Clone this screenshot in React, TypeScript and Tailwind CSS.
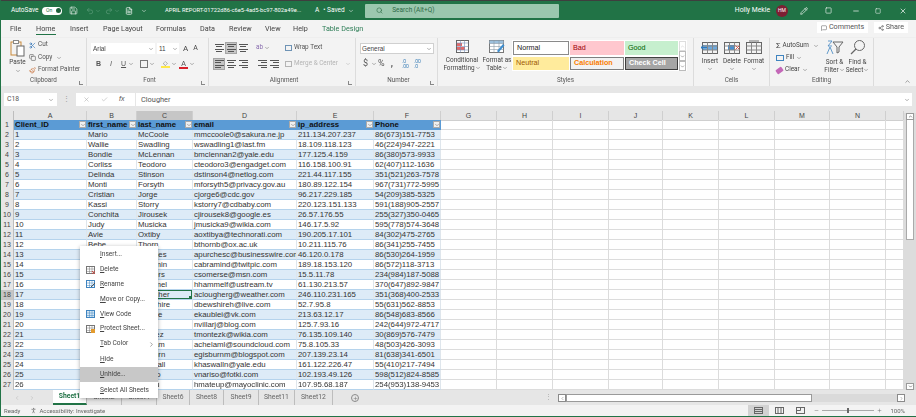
import { ChevronDown, ChevronUp, ChevronRight, ChevronLeft, Plus, Search, Undo2, Redo2, Save, FileText, Pencil, X, Minus, Square, MessageSquare, Share2, Check, Scissors, Copy, Paintbrush, PersonStanding } from "lucide-react";

const font = "font-['Liberation_Sans',Arial,sans-serif]";
const ui = "font-['Roboto','Noto_Sans',sans-serif]";

const rows = [
  ["1", "Mario", "McCoole", "mmccoole0@sakura.ne.jp", "211.134.207.237", "86(673)151-7753"],
  ["2", "Wallie", "Swadling", "wswadling1@last.fm", "18.109.118.123", "46(224)947-2221"],
  ["3", "Bondie", "McLennan", "bmclennan2@yale.edu", "177.125.4.159", "86(380)573-9933"],
  ["4", "Corliss", "Teodoro", "cteodoro3@engadget.com", "116.158.100.91", "62(407)112-1636"],
  ["5", "Delinda", "Stinson", "dstinson4@netlog.com", "221.44.117.155", "351(521)263-7578"],
  ["6", "Monti", "Forsyth", "mforsyth5@privacy.gov.au", "180.89.122.154", "967(731)772-5995"],
  ["7", "Cristian", "Jorge", "cjorge6@cdc.gov", "96.217.229.185", "54(209)385-5325"],
  ["8", "Kassi", "Storry", "kstorry7@cdbaby.com", "220.123.151.133", "591(188)905-2557"],
  ["9", "Conchita", "Jirousek", "cjirousek8@google.es", "26.57.176.55", "255(327)350-0465"],
  ["10", "Judy", "Musicka", "jmusicka9@wikia.com", "146.17.5.92", "595(778)574-3648"],
  ["11", "Avie", "Oxtiby", "aoxtibya@technorati.com", "190.205.17.101", "84(302)475-2765"],
  ["12", "Bebe", "Thorn", "bthornb@ox.ac.uk", "10.211.115.76", "86(341)255-7455"],
  ["13", "Aurie", "Purches", "apurchesc@businesswire.com", "46.120.0.178", "86(530)264-1959"],
  ["14", "Cale", "Abramin", "cabramind@twitpic.com", "189.18.153.120", "86(572)118-3713"],
  ["15", "Carly", "Somers", "csomerse@msn.com", "15.5.11.78", "234(984)187-5088"],
  ["16", "Hal", "Hammel", "hhammelf@ustream.tv", "61.130.213.57", "370(647)892-9847"],
  ["17", "Ana", "Clougher", "aclougherg@weather.com", "246.110.231.165", "351(368)400-2533"],
  ["18", "Dale", "Bewshire", "dbewshireh@live.com", "52.7.95.8", "55(631)562-8853"],
  ["19", "Eda", "Kauble", "ekaublei@vk.com", "213.63.12.17", "86(548)683-8566"],
  ["20", "Nan", "Villar", "nvillarj@blog.com", "125.7.93.16", "242(644)972-4717"],
  ["21", "Tad", "Montez", "tmontezk@wikia.com", "76.135.109.140", "30(869)576-7479"],
  ["22", "Abe", "Chelam", "achelaml@soundcloud.com", "75.8.105.33", "48(503)426-3093"],
  ["23", "Eli", "Gisburn", "egisburnm@blogspot.com", "207.139.23.14", "81(638)341-6501"],
  ["24", "Kay", "Haswall", "khaswalln@yale.edu", "161.122.226.47", "55(410)217-7494"],
  ["25", "Val", "Nariso", "vnariso@fotki.com", "102.193.49.126", "598(512)824-8585"],
  ["26", "Hew", "Mateu", "hmateup@mayoclinic.com", "107.95.68.187", "254(953)138-9453"],
];

const gridCols = "grid grid-cols-[13px_73px_50px_56px_104px_77px_67px_56px_56px_56px_54px_56px_56px_55px_56px_18px]";
const emptyCols = ["G", "H", "I", "J", "K", "L", "M", "N", ""];
const columnLetters = ["A", "B", "C", "D", "E", "F", ...emptyCols];

function Caret({ className = "" }: { className?: string }) {
  return <ChevronDown size={6} strokeWidth={2} className={`shrink-0 text-[#666] ${className}`} />;
}

function GroupLabel({ children, launcher = false }: { children: string; launcher?: boolean }) {
  return (
    <div className="relative mt-auto mb-[1px] flex h-[8px] items-center justify-center text-[6.3px] text-[#555]">
      {children}
      {launcher && <span className="absolute right-[3px] bottom-0 h-[4px] w-[4px] border-b border-l border-[#888]" />}
    </div>
  );
}

function Lines({ align, active = false }: { align: "left" | "center" | "right"; active?: boolean }) {
  const item = align === "left" ? "items-start" : align === "right" ? "items-end" : "items-center";
  return (
    <div className={`flex h-[12px] w-[12px] flex-col justify-center gap-[1.5px] px-px ${item} ${active ? "border border-[#a5a5a5] bg-[#c6c6c6]" : ""}`}>
      <span className="h-px w-[9px] bg-[#555]" />
      <span className="h-px w-[6px] bg-[#555]" />
      <span className="h-px w-[9px] bg-[#555]" />
      <span className="h-px w-[6px] bg-[#555]" />
    </div>
  );
}

function TableIcon({ tone }: { tone: "insert" | "delete" | "format" }) {
  return (
    <svg width="18" height="15" viewBox="0 0 18 15" fill="none">
      {tone !== "format" && <rect x="1" y="5" width="16" height="5" fill={tone === "insert" ? "#6fa9dc" : "#fff"} />}
      {tone === "delete" && <rect x="5" y="5" width="7" height="5" fill="#4a90d0" />}
      {tone === "format" && <rect x="4" y="0.5" width="10" height="1" fill="#777" />}
      <rect x="1.5" y="2.5" width="15" height="11" stroke="#666" />
      <path d="M1.5 6h15M1.5 10h15M6.5 2.5v11M11.5 2.5v11" stroke="#888" />
      {tone === "insert" && <path d="M0 7.5h6M0 7.5l2-2M0 7.5l2 2" stroke="#2a7bc4" />}
      {tone === "delete" && <path d="M12.5 5.5l4 4M16.5 5.5l-4 4" stroke="#d2584f" />}
    </svg>
  );
}

function Titlebar() {
  return (
    <div className={`flex h-[20px] shrink-0 items-center border-t border-t-[#3e3e3e] bg-[#217346] text-white ${ui}`}>
      <span className="ml-[10px] w-[28px] text-[6.5px]">AutoSave</span>
      <div className="ml-[3px] flex h-[8px] w-[20px] items-center justify-between rounded-full bg-white pr-[1px] pl-[4px]">
        <span className="text-[5px] text-[#217346]">On</span>
        <span className="h-[5px] w-[5px] rounded-full bg-[#1c5f3a]" />
      </div>
      <Save size={9} className="ml-[7px] text-[#cfe0d6]" />
      <Undo2 size={8} className="ml-[8px] text-[#5e9d7c]" />
      <Caret className="ml-px !text-[#5e9d7c]" />
      <Redo2 size={8} className="ml-[4px] text-[#5e9d7c]" />
      <Caret className="ml-px !text-[#5e9d7c]" />
      <FileText size={8} className="ml-[5px] text-white" />
      <Caret className="ml-[8px] !text-white" />
      <span className="ml-[18px] w-[143px] text-[5.75px] whitespace-nowrap">APRIL REPORT-01722d86-c6e5-4ad5-bc97-802a49e...</span>
      <span className="ml-[7px] text-[6.5px]">A</span>
      <span className="ml-[4px] w-[24px] text-[6.5px] whitespace-nowrap">• Saved</span>
      <Caret className="ml-px !text-white" />
      <div className="ml-[11px] flex h-[14px] w-[194px] items-center rounded-[1px] bg-[#9bc7ae] text-[#2c6a45]">
        <Search size={7} className="ml-[11px]" />
        <span className="ml-[9px] text-[6.5px]">Search (Alt+Q)</span>
      </div>
      <span className="ml-auto text-[6.8px] whitespace-nowrap">Holly Mekle</span>
      <div className="ml-[6px] flex h-[12px] w-[12px] items-center justify-center rounded-full bg-[#7d1f33] text-[5px]">HM</div>
      <Pencil size={8} className="ml-[12px]" />
      <Square size={7} className="ml-[17px]" />
      <Minus size={8} className="ml-[20px]" />
      <Square size={6} className="ml-[15px]" />
      <X size={8} className="mr-[9px] ml-[18px]" />
    </div>
  );
}

function Tabs() {
  const names = [
    ["File", "w-[26px]"],
    ["Home", "w-[34px]"],
    ["Insert", "w-[33px]"],
    ["Page Layout", "w-[53px]"],
    ["Formulas", "w-[44px]"],
    ["Data", "w-[29px]"],
    ["Review", "w-[36px]"],
    ["View", "w-[28px]"],
    ["Help", "w-[29px]"],
    ["Table Design", "w-[50px]"],
  ];
  return (
    <div className={`flex h-[18px] shrink-0 items-center bg-[#f3f3f3] pl-[9px] text-[7.2px] text-[#444] ${ui}`}>
      {names.map(([name, width]) => (
        <div key={name} className={`relative flex h-full items-center whitespace-nowrap ${width} ${name === "Table Design" ? "text-[#2d7d56]" : ""}`}>
          {name}
          {name === "Home" && <span className="absolute bottom-[3px] left-0 h-[1.5px] w-[20px] bg-[#217346]" />}
        </div>
      ))}
      <div className="ml-auto flex items-center gap-[6px] pr-[8px] pb-[3px] text-[#555]">
        <div className="flex h-[11px] w-[51px] items-center justify-center gap-[2px] bg-white"><MessageSquare size={6} />Comments</div>
        <div className="flex h-[11px] w-[34px] items-center justify-center gap-[2px] bg-white"><Share2 size={6} />Share</div>
      </div>
    </div>
  );
}

function Ribbon() {
  return (
    <div className={`flex h-[48px] shrink-0 bg-[#f3f3f3] text-[6.4px] text-[#444] shadow-[0_1px_2px_#bbb] ${ui}`}>
      <div className="flex w-[86px] flex-col border-r border-[#dcdcdc] pt-[2px]">
        <div className="flex">
          <div className="ml-[7px] flex w-[19px] flex-col items-center">
            <svg width="15" height="17" viewBox="0 0 15 17" fill="none">
              <rect x="1" y="2" width="10" height="13" stroke="#c98a3b" />
              <rect x="3.5" y="0.5" width="5" height="3" fill="#fff" stroke="#888" />
              <rect x="7" y="6" width="7" height="10" fill="#fff" stroke="#666" />
            </svg>
            <span className="mt-px">Paste</span>
            <Caret />
          </div>
          <div className="ml-[2px] flex flex-col gap-[2.5px] text-[#555]">
            <div className="flex h-[10px] items-center gap-[2px]"><Scissors size={7} className="text-[#2a6fb5]" />Cut</div>
            <div className="flex h-[10px] items-center gap-[2px]"><Copy size={7} />Copy<Caret className="ml-[2px]" /></div>
            <div className="flex h-[10px] items-center gap-[2px] whitespace-nowrap"><Paintbrush size={7} className="text-[#c9723b]" />Format Painter</div>
          </div>
        </div>
        <GroupLabel launcher>Clipboard</GroupLabel>
      </div>

      <div className="flex w-[122px] flex-col border-r border-[#dcdcdc] pt-[5px] pl-[4px]">
        <div className="flex h-[11px] items-center">
          <div className={`flex h-[11px] w-[64px] items-center justify-between bg-white pr-px pl-[2px] ${font}`}>Arial<Caret /></div>
          <div className={`ml-[2px] flex h-[11px] w-[22px] items-center justify-between bg-white pr-px pl-[2px] ${font}`}>11<Caret /></div>
          <span className="ml-[4px] text-[8px]">A</span>
          <span className="ml-[5px] text-[7px]">A</span>
        </div>
        <div className={`mt-[4px] flex h-[12px] items-center text-[#555] ${font}`}>
          <b className="ml-[5px] text-[7px]">B</b>
          <i className="ml-[9px] text-[7px]">I</i>
          <u className="ml-[9px] text-[7px]">U</u>
          <Caret className="ml-[2px]" />
          <span className="ml-[6px] h-[8px] w-[8px] border border-[#777]" />
          <Caret className="ml-[1px]" />
          <div className="ml-[6px] flex w-[9px] flex-col items-center"><span className="text-[6px] leading-[6px]">◇</span><span className="h-[2px] w-[9px] bg-[#ffe94a]" /></div>
          <Caret className="ml-[1px]" />
          <div className="ml-[2px] flex w-[9px] flex-col items-center"><span className="text-[7px] leading-[7px]">A</span><span className="h-[2px] w-[9px] bg-[#d8212b]" /></div>
          <Caret className="ml-[1px]" />
        </div>
        <GroupLabel launcher>Font</GroupLabel>
      </div>

      <div className="flex w-[147px] flex-col border-r border-[#dcdcdc] pt-[4px] pl-[4px]">
        <div className="flex">
          <div className="flex flex-col gap-[4px]">
            <div className="flex"><Lines align="center" /><Lines align="center" active /><Lines align="center" /></div>
            <div className="flex"><Lines align="left" active /><Lines align="center" /><Lines align="right" /></div>
          </div>
          <div className="ml-[7px] flex flex-col gap-[4px]">
            <div className="flex h-[12px] items-center text-[#8a6fb0]">ab<Caret className="ml-px" /></div>
            <div className="flex"><Lines align="right" /><Lines align="right" /></div>
          </div>
          <div className="ml-[5px] flex flex-col gap-[4px]">
            <div className="flex h-[12px] items-center gap-[2px] whitespace-nowrap text-[#555]"><span className="h-[6px] w-[7px] border border-[#6e93b5]" />Wrap Text</div>
            <div className="flex h-[12px] items-center gap-[2px] whitespace-nowrap text-[#b4b4b4]"><span className="h-[6px] w-[7px] border border-[#b4b4b4]" />Merge &amp; Center<Caret className="ml-[5px] !text-[#b4b4b4]" /></div>
          </div>
        </div>
        <GroupLabel launcher>Alignment</GroupLabel>
      </div>

      <div className="flex w-[82px] flex-col border-r border-[#dcdcdc] pt-[5px] pl-[4px]">
        <div className={`flex h-[11px] w-[74px] items-center justify-between border border-[#d0d0d0] bg-white pr-px pl-[1px] ${font}`}>General<Caret /></div>
        <div className="mt-[4px] flex h-[12px] items-center text-[9px] text-[#555]">
          <span className="ml-[3px]">$</span>
          <Caret className="ml-[3px]" />
          <span className="ml-[1px]">%</span>
          <b className="ml-[6px]">,</b>
          <span className="ml-[9px] text-[5px] leading-[5px] text-[#3b7fb8]">.0<br />.00</span>
          <span className="ml-[5px] text-[5px] leading-[5px] text-[#3b7fb8]">.00<br />.0</span>
        </div>
        <GroupLabel launcher>Number</GroupLabel>
      </div>

      <div className="flex w-[256px] flex-col border-r border-[#dcdcdc] pt-[2px]">
        <div className="flex">
          <div className="ml-[1px] flex w-[46px] flex-col items-center leading-[8px]">
            <svg width="15" height="13" viewBox="0 0 15 13" fill="none">
              <rect x="1.5" y="0.5" width="12" height="12" fill="#fff" stroke="#666" />
              <rect x="2" y="3" width="5" height="3" fill="#e46a6a" />
              <rect x="2" y="7" width="8" height="3" fill="#e46a6a" />
              <path d="M1.5 3h12M1.5 6.5h12M1.5 10h12M5.5.5v12M9.5.5v12" stroke="#7a90b8" strokeWidth="0.6" />
            </svg>
            <span className="mt-[3px] whitespace-nowrap">Conditional</span>
            <span className="flex items-center whitespace-nowrap">Formatting<Caret /></span>
          </div>
          <div className="flex w-[24px] flex-col items-center leading-[8px]">
            <svg width="16" height="13" viewBox="0 0 16 13" fill="none">
              <rect x="0.5" y="0.5" width="14" height="12" fill="#fff" stroke="#777" />
              <rect x="0.5" y="0.5" width="14" height="3" fill="#9cc0dd" />
              <path d="M0.5 3.5h14M0.5 6.5h14M0.5 9.5h14M5 .5v12M10 .5v12" stroke="#8a9aa8" strokeWidth="0.6" />
              <path d="M8 11l6-7 1.5 1.5-6 7z" fill="#3f8fd0" />
            </svg>
            <span className="mt-[3px] whitespace-nowrap">Format as</span>
            <span className="flex items-center whitespace-nowrap">Table<Caret /></span>
          </div>
          <div className={`ml-[3px] flex h-[31px] items-start bg-white p-px text-[7.2px] ${font}`}>
            <div className="grid grid-cols-[56px_54px_53px] grid-rows-[14px_13px] gap-x-px gap-y-[2px]">
              <div className="flex items-center border border-[#8a8a8a] bg-white pl-[3px] text-[#222]">Normal</div>
              <div className="flex items-center bg-[#ffc7ce] pl-[3px] text-[#9c0006]">Bad</div>
              <div className="flex items-center bg-[#c6efce] pl-[3px] text-[#006100]">Good</div>
              <div className="flex items-center bg-[#ffeb9c] pl-[3px] text-[#9c5700]">Neutral</div>
              <div className="flex items-center border border-[#7f7f7f] bg-[#f2f2f2] pl-[3px] font-bold text-[#fa7d00]">Calculation</div>
              <div className="flex items-center border border-[#3f3f3f] bg-[#a5a5a5] pl-[3px] font-bold text-white">Check Cell</div>
            </div>
            <div className="ml-[1px] flex flex-col">
              <div className="flex h-[10px] w-[7px] items-center justify-center border border-[#dedede]"><ChevronUp size={5} className="text-[#c0c0c0]" /></div>
              <div className="flex h-[10px] w-[7px] items-center justify-center border border-[#bbb]"><ChevronDown size={5} /></div>
              <div className="flex h-[10px] w-[7px] items-center justify-center border border-[#bbb]"><ChevronDown size={5} /></div>
            </div>
          </div>
        </div>
        <GroupLabel>Styles</GroupLabel>
      </div>

      <div className="flex w-[76px] flex-col border-r border-[#dcdcdc] pt-[2px]">
        <div className="flex pl-[5px]">
          {(["insert", "delete", "format"] as const).map((tone) => (
            <div key={tone} className="flex w-[22px] flex-col items-center leading-[8px]">
              <TableIcon tone={tone} />
              <span className="mt-[2px]">{tone === "insert" ? "Insert" : tone === "delete" ? "Delete" : "Format"}</span>
              <Caret className="mt-[1px]" />
            </div>
          ))}
        </div>
        <GroupLabel>Cells</GroupLabel>
      </div>

      <div className="flex w-[104px] flex-col border-r border-[#dcdcdc] pt-[2px]">
        <div className="flex pl-[6px]">
          <div className="flex w-[47px] flex-col gap-[2px] pt-px">
            <div className="flex h-[10px] items-center gap-[2px] whitespace-nowrap"><span className="text-[8px]">Σ</span>AutoSum<Caret className="ml-[2px]" /></div>
            <div className="flex h-[10px] items-center gap-[2px]"><span className="h-[6px] w-[8px] border border-[#3f84c0]" />Fill<Caret /></div>
            <div className="flex h-[10px] items-center gap-[2px]"><span className="h-[5px] w-[7px] rotate-[-35deg] rounded-[1px] bg-[#c468b8]" />Clear<Caret /></div>
          </div>
          <div className="flex w-[23px] flex-col items-center leading-[8px]">
            <svg width="18" height="15" viewBox="0 0 18 15" fill="none">
              <path d="M7 2h10l-4 5v5l-2 1V7z" stroke="#666" />
              <path d="M1 14l3-7 3 7M2 1h4L2 6h4" stroke="#3f84c0" strokeWidth="0.8" />
            </svg>
            <span className="mt-[3px]">Sort &amp;</span>
            <span className="flex items-center">Filter<Caret /></span>
          </div>
          <div className="flex w-[23px] flex-col items-center leading-[8px]">
            <svg width="16" height="15" viewBox="0 0 16 15" fill="none">
              <circle cx="9.5" cy="5.5" r="5" stroke="#666" />
              <path d="M6 9l-5 5" stroke="#666" strokeWidth="1.2" />
            </svg>
            <span className="mt-[3px]">Find &amp;</span>
            <span className="flex items-center">Select<Caret /></span>
          </div>
        </div>
        <GroupLabel>Editing</GroupLabel>
      </div>

      <div className="flex flex-1 items-end justify-end pr-[5px] pb-[1px]">
        <ChevronUp size={7} className="text-[#666]" />
      </div>
    </div>
  );
}

function FormulaBar() {
  return (
    <div className={`flex h-[25px] shrink-0 items-center bg-[#e6e6e6] pt-[2px] pr-[4px] pl-[3px] text-[#555] ${ui}`}>
      <div className="flex h-[13px] w-[53px] items-center justify-between bg-white pr-[3px] pl-[3px] text-[6.8px]">C18<Caret /></div>
      <span className="ml-[6px] text-[7px] text-[#999]">⋮</span>
      <div className="ml-[6px] flex h-[13px] w-[59px] items-center bg-white pl-[7px] text-[#b0b0b0]">
        <X size={7} />
        <Check size={7} className="ml-[11px]" />
        <i className={`ml-[11px] text-[7px] text-[#555] ${font}`}>fx</i>
      </div>
      <div className="ml-[1px] flex h-[13px] flex-1 items-center justify-between bg-white pr-[2px] pl-[5px] text-[7.4px]">
        Clougher
        <Caret />
      </div>
    </div>
  );
}

function Sheet() {
  return (
    <div className={`min-h-0 flex-1 overflow-hidden bg-white text-[7.8px] leading-[10px] text-[#333] ${font}`}>
      <div className={`${gridCols} h-[9px] text-[7px] leading-[9px] text-[#444]`}>
        <div className="border-r border-b border-[#bdbdbd] bg-[#e6e6e6]" />
        {columnLetters.map((letter, index) => (
          <div key={index} className={`border-r border-b border-[#cfcfcf] text-center ${letter === "C" ? "bg-[#c6c6c6]" : "bg-[#e6e6e6]"}`}>{letter}</div>
        ))}
      </div>
      <div className={`${gridCols} h-[10px]`}>
        <div className="border-r border-[#bdbdbd] bg-[#e6e6e6] text-center text-[7px] leading-[10px] text-[#444]">1</div>
        {["Client_ID", "first_name", "last_name", "email", "ip_address", "Phone"].map((name) => (
          <div key={name} className="relative overflow-hidden bg-[#5b9bd5] pl-[1px] font-bold whitespace-nowrap text-[#111]">
            {name}
            <span className="absolute top-[1px] right-[1px] flex h-[7px] w-[7px] items-center justify-center border border-[#aaa] bg-[#f0f0f0]">
              <Caret />
            </span>
          </div>
        ))}
        {emptyCols.map((letter, index) => (
          <div key={index} className="border-r border-b border-[#dcdcdc]" />
        ))}
      </div>
      {rows.map((row, r) => {
        const rowNumber = r + 2;
        const selected = rowNumber === 18;
        const band = r % 2 === 0 ? "bg-[#ddebf7]" : "bg-white";
        return (
          <div key={r} className={`${gridCols} h-[10px]`}>
            <div className={`border-r border-[#bdbdbd] text-center text-[7px] leading-[10px] text-[#444] ${selected ? "bg-[#c6c6c6]" : "bg-[#e6e6e6]"}`}>{rowNumber}</div>
            {row.map((value, c) => (
              <div key={c} className={`relative overflow-hidden border-r border-b border-r-[#dfe6ec] border-b-[#b5d3ec] pl-[1px] whitespace-nowrap ${band}`}>
                {value}
                {selected && c === 2 && (
                  <span className="absolute inset-0 border border-[#217346]">
                    <span className="absolute right-0 bottom-0 h-[2px] w-[2px] bg-[#217346]" />
                  </span>
                )}
              </div>
            ))}
            {emptyCols.map((letter, index) => (
              <div key={index} className="border-r border-b border-[#dcdcdc]" />
            ))}
          </div>
        );
      })}
    </div>
  );
}

const menuItems = [
  { label: "Insert...", icon: null },
  { label: "Delete", icon: "delete" },
  { label: "Rename", icon: "rename" },
  { label: "Move or Copy...", icon: null },
  { label: "View Code", icon: "code" },
  { label: "Protect Sheet...", icon: "protect" },
  { label: "Tab Color", icon: null, arrow: true },
  { label: "Hide", icon: null, gap: true },
  { label: "Unhide...", icon: null, hover: true },
  { label: "Select All Sheets", icon: null, gap: true },
];

function MenuIcon({ name }: { name: string }) {
  const stroke = name === "rename" || name === "code" ? "#3f84c0" : "#777";
  return (
    <svg width="10" height="9" viewBox="0 0 10 9" fill="none">
      <rect x="0.5" y="0.5" width="8" height="7" fill={name === "code" ? "#d8e7f3" : "#fff"} stroke={stroke} />
      <path d="M0.5 3h8M0.5 5.5h8M3.5 .5v7M6 .5v7" stroke={stroke} strokeWidth="0.5" />
      {name === "delete" && <path d="M6 5l3 3M9 5l-3 3" stroke="#d0473d" />}
      {name === "rename" && <path d="M5 7l4-4" stroke="#555" />}
      {name === "protect" && <rect x="5" y="4" width="4" height="4" fill="#e39b2e" />}
    </svg>
  );
}

function ContextMenu() {
  return (
    <div className={`absolute top-[246px] left-[79px] w-[78px] bg-white pt-[2px] text-[6.6px] text-[#444] shadow-[0_1px_4px_rgba(0,0,0,0.35)] ${ui}`}>
      {menuItems.map((item) => (
        <div key={item.label} className={`flex h-[14.8px] items-center ${item.hover ? "bg-[#c8c8c8]" : ""} ${item.gap ? "mt-[1px]" : ""}`}>
          <div className="flex w-[20px] justify-center pl-[1px]">
            {item.icon && <MenuIcon name={item.icon} />}
          </div>
          <span className="inline-block whitespace-nowrap first-letter:underline">{item.label}</span>
          {item.arrow && <ChevronRight size={7} className="mr-[3px] ml-auto text-[#666]" />}
        </div>
      ))}
    </div>
  );
}

function SheetTabs() {
  const tabs = [
    ["Sheet1", "w-[34px]"],
    ["Sheet2", "w-[35px]"],
    ["Sheet4", "w-[35px]"],
    ["Sheet6", "w-[33px]"],
    ["Sheet8", "w-[34px]"],
    ["Sheet9", "w-[35px]"],
    ["Sheet11", "w-[36px]"],
    ["Sheet12", "w-[38px]"],
  ];
  return (
    <div className={`flex h-[15px] shrink-0 items-start bg-[#e6e6e6] text-[6.8px] text-[#666] ${ui}`}>
      <div className="flex h-[15px] w-[52px] items-center pl-[13px] text-[#b5b5b5]">
        <ChevronLeft size={6} />
        <ChevronRight size={6} className="ml-[9px]" />
      </div>
      {tabs.map(([name, width], index) => (
        <div
          key={name}
          className={`flex h-[15px] items-center justify-center border-r border-[#bdbdbd] ${width} ${index === 0 ? "border-b-2 border-b-[#217346] bg-white font-bold text-[#217346]" : ""}`}
        >
          {name}
        </div>
      ))}
      <div className="ml-[18px] flex h-[8px] w-[8px] translate-y-[4px] items-center justify-center rounded-full border border-[#8a8a8a]">
        <Plus size={5} />
      </div>
      <span className="ml-[186px] pt-[2px] text-[7px] text-[#aaa]">⋮</span>
      <div className="ml-[6px] flex h-[8px] w-[347px] translate-y-[4px] items-center">
        <div className="flex h-[8px] w-[8px] items-center justify-center border border-[#8a8a8a] bg-white"><ChevronLeft size={5} /></div>
        <div className="h-[8px] w-[246px] border border-[#9a9a9a] bg-white" />
        <div className="h-[8px] flex-1 bg-[#dadada]" />
        <div className="flex h-[8px] w-[8px] items-center justify-center border border-[#8a8a8a] bg-white"><ChevronRight size={5} /></div>
      </div>
    </div>
  );
}

function ViewIcon({ kind }: { kind: "normal" | "layout" | "break" }) {
  return (
    <svg width="9" height="7" viewBox="0 0 9 7" fill="none">
      <rect x="0.5" y="0.5" width="8" height="6" stroke="#666" />
      {kind === "normal" && <path d="M0.5 2.5h8M0.5 4.5h8" stroke="#666" />}
      {kind === "layout" && <path d="M3 .5v6M6 .5v6" stroke="#666" />}
      {kind === "break" && <path d="M4.5 .5v3h-4" stroke="#666" />}
    </svg>
  );
}

function StatusBar() {
  return (
    <div className={`flex h-[11px] shrink-0 items-center bg-[#f3f3f3] text-[6px] text-[#666] ${ui}`}>
      <span className="ml-[3px]">Ready</span>
      <PersonStanding size={7} className="ml-[10px]" />
      <span className="ml-[2px]">Accessibility: Investigate</span>
      <div className="ml-auto flex h-full items-center">
        <div className="flex h-full w-[21px] items-center justify-center bg-[#d2d2d2]"><ViewIcon kind="normal" /></div>
        <div className="flex h-full w-[21px] items-center justify-center"><ViewIcon kind="layout" /></div>
        <div className="flex h-full w-[21px] items-center justify-center"><ViewIcon kind="break" /></div>
        <Minus size={5} className="ml-[3px]" />
        <div className="relative mx-[3px] flex h-full w-[52px] items-center">
          <span className="h-px w-full bg-[#aaa]" />
          <span className="absolute left-[25px] h-[5px] w-[2px] bg-[#666]" />
        </div>
        <Plus size={5} />
        <span className="mr-[11px] ml-[8px]">100%</span>
      </div>
    </div>
  );
}

export default function App() {
  return (
    <div className="relative flex h-[417px] w-[916px] flex-col overflow-hidden border-b border-l border-[#217346] blur-[0.35px]">
      <Titlebar />
      <Tabs />
      <Ribbon />
      <FormulaBar />
      <div className="flex min-h-0 flex-1">
        <Sheet />
        <div className="flex w-[12px] shrink-0 flex-col bg-[#dcdcdc] px-[2px]">
          <div className="-mx-[2px] h-[2px] bg-[#e6e6e6]" />
          <div className="flex h-[7px] items-center justify-center border border-[#999] bg-white"><ChevronUp size={5} /></div>
          <div className="h-[120px] border-x border-b border-[#aaa] bg-white" />
          <div className="mt-auto flex h-[7px] items-center justify-center border border-[#999] bg-white"><ChevronDown size={5} /></div>
        </div>
      </div>
      <SheetTabs />
      <StatusBar />
      <ContextMenu />
    </div>
  );
}
